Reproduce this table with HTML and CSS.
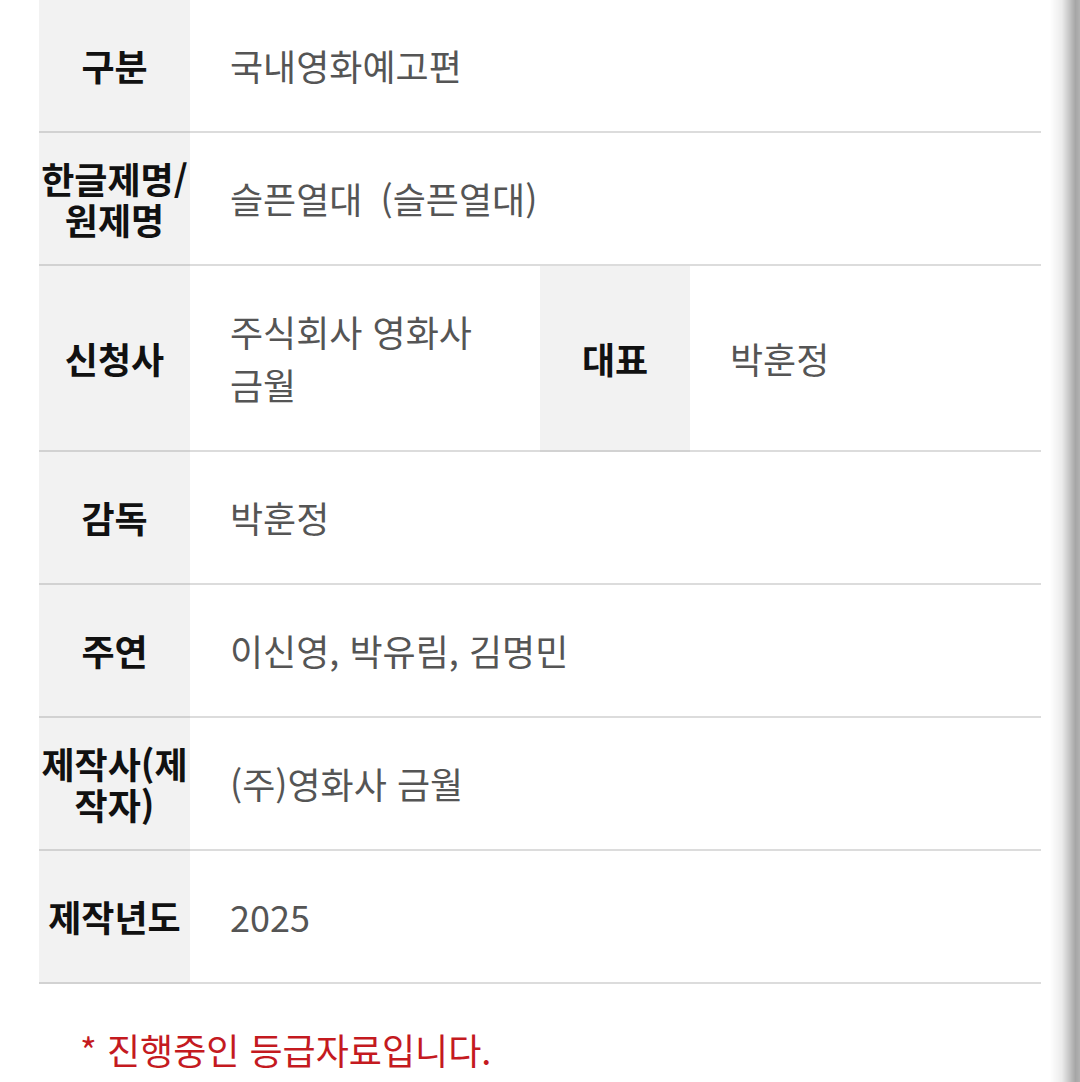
FILE: index.html
```html
<!DOCTYPE html>
<html lang="ko">
<head>
  <meta charset="UTF-8">
  <meta name="viewport" content="width=device-width, initial-scale=1">
  <title>등급분류 정보</title>
  <link rel="stylesheet" href="styles.css">
</head>
<body>
  <div class="container">
    <table class="info-table">
      <colgroup>
        <col class="col-label">
        <col class="col-value">
        <col class="col-label2">
        <col>
      </colgroup>
      <tr>
        <th>구분</th>
        <td colspan="3">국내영화예고편</td>
      </tr>
      <tr>
        <th>한글제명/원제명</th>
        <td colspan="3">슬픈열대&ensp;(슬픈열대)</td>
      </tr>
      <tr>
        <th>신청사</th>
        <td>주식회사 영화사 금월</td>
        <th>대표</th>
        <td>박훈정</td>
      </tr>
      <tr>
        <th>감독</th>
        <td colspan="3">박훈정</td>
      </tr>
      <tr>
        <th>주연</th>
        <td colspan="3">이신영, 박유림, 김명민</td>
      </tr>
      <tr>
        <th>제작사(제작자)</th>
        <td colspan="3">(주)영화사 금월</td>
      </tr>
      <tr>
        <th>제작년도</th>
        <td colspan="3">2025</td>
      </tr>
    </table>
    <p class="notice">* 진행중인 등급자료입니다.</p>
  </div>
  <div class="edge-shade"></div>
</body>
</html>
```

FILE: styles.css
```css
body {
  font-family: 'Noto Sans CJK KR', 'Noto Sans', sans-serif;
  background: #fff;
  color: #111;
  margin: 0;
  padding: 0;
}
.container {
  padding: 0 39px;
}
.info-table {
  width: 1002px;
  border-collapse: collapse;
  table-layout: fixed;
}
.col-label {
  width: 151px;
}
.col-value {
  width: 350px;
}
.col-label2 {
  width: 150px;
}
.info-table th {
  background: #f2f2f2;
  font-size: 36px;
  font-weight: bold;
  line-height: 41px;
  color: #111;
  padding: 0;
  text-align: center;
  vertical-align: middle;
  border-bottom: 2px solid #d2d2d2;
}
.info-table td {
  font-size: 36px;
  line-height: 53px;
  color: #555;
  padding: 39px 40px;
  height: 53px;
  vertical-align: middle;
  word-break: keep-all;
  border-bottom: 2px solid #dcdcdc;
}
.notice {
  margin: 40px 0 0 41px;
  font-size: 36px;
  line-height: 50px;
  color: #c41a1f;
}
.edge-shade {
  position: fixed;
  top: 0;
  right: 0;
  width: 30px;
  height: 100%;
  background: linear-gradient(to right, rgba(0,0,0,0) 0%, rgba(0,0,0,0.08) 40%, rgba(0,0,0,0.35) 85%, rgba(0,0,0,0.3) 100%);
}
```
